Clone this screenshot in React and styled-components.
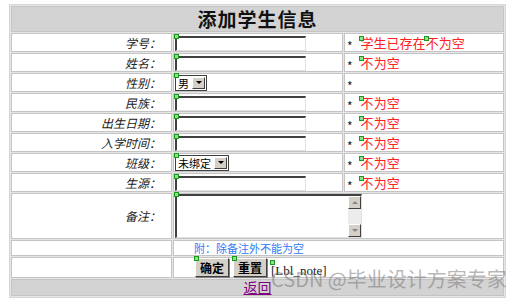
import React from "react";
import styled, { createGlobalStyle } from "styled-components";

/* COLORS */
const colorHeader = "#d3d3d3";
const colorCellBorder = "#c4c4c4";
const colorRed = "#ff2020";
const colorBlue = "#2e7cf6";
const colorPurple = "#800080";

const cjk = "'Noto Sans CJK SC', 'DejaVu Sans', sans-serif";

const GlobalStyle = createGlobalStyle`
    body {
        margin: 0;
        background: #ffffff;
        font-family: ${cjk};
    }
`;

const Page = styled.div`
    position: relative;
    width: 517px;
    height: 300px;
    padding: 4px 0 0 9px;
    box-sizing: border-box;
    overflow: hidden;
`;

const Table = styled.table`
    width: 497px;
    border-collapse: separate;
    border-spacing: 1px;
    border: 1px solid #d6d6d6;
    background: #e6e6e6;
    table-layout: fixed;
`;

const Cell = styled.td`
    border: 1px solid ${colorCellBorder};
    background: ${(p) => (p.$gray ? colorHeader : "#ffffff")};
    height: ${(p) => p.$h || 17}px;
    padding: 0 1px;
    font-size: 12px;
    line-height: 14px;
    vertical-align: middle;
    text-align: ${(p) => p.$align || "left"};
`;

const HeaderText = styled.span`
    font-size: 19px;
    line-height: 22px;
    font-weight: bold;
    letter-spacing: 1px;
    color: #111;
`;

const Label = styled.span`
    font-style: italic;
    font-size: 12px;
    color: #222;
    margin-right: 9px;
`;

const Field = styled.span`
    position: relative;
    display: inline-block;
    vertical-align: ${(p) => (p.$inline ? "baseline" : "middle")};
`;

const Marker = styled.i`
    position: absolute;
    top: ${(p) => p.$top ?? -2}px;
    left: ${(p) => p.$left ?? -1}px;
    width: 3px;
    height: 3px;
    background: #8ee08e;
    border: 1px solid #1a9a1a;
    z-index: 2;
`;

const TextInput = styled.span`
    display: block;
    width: 128px;
    height: 12px;
    border-style: solid;
    border-width: 2px 1px 1px 2px;
    border-color: #404040 #e0e0e0 #e0e0e0 #404040;
    background: #fff;
`;

const Select = styled.span`
    display: flex;
    align-items: center;
    height: 14px;
    border: 1px solid #404040;
    background: #fff;
    font-size: 11px;
    line-height: 14px;
    padding-left: 2px;
    gap: 3px;
    color: #000;
`;

const DropButton = styled.span`
    width: 11px;
    height: 10px;
    margin-right: 1px;
    background: #d4d0c8;
    border: 1px solid;
    border-color: #fff #404040 #404040 #fff;
    display: flex;
    align-items: center;
    justify-content: center;
`;

const Arrow = styled.span`
    width: 0;
    height: 0;
    border-left: 3px solid transparent;
    border-right: 3px solid transparent;
    border-top: 3px solid #000;
`;

const Star = styled.span`
    position: relative;
    top: 3px;
    font-size: 12px;
    color: #222;
    margin: 0 8px 0 1px;
`;

const Message = styled.span`
    color: ${colorRed};
    font-size: 13px;
    line-height: 14px;
`;

const TextArea = styled.span`
    display: flex;
    justify-content: flex-end;
    width: 184px;
    height: 41px;
    border-style: solid;
    border-width: 2px 1px 1px 2px;
    border-color: #404040 #e0e0e0 #e0e0e0 #404040;
    background: #fff;
`;

const ScrollBar = styled.span`
    width: 13px;
    display: flex;
    flex-direction: column;
    justify-content: space-between;
    background: #ececec;
`;

const ScrollButton = styled.span`
    height: 11px;
    background: #d4d0c8;
    border: 1px solid;
    border-color: #fff #404040 #404040 #fff;
    display: flex;
    align-items: center;
    justify-content: center;
`;

const ScrollArrow = styled.span`
    width: 0;
    height: 0;
    border-left: 3px solid transparent;
    border-right: 3px solid transparent;
    ${(p) => (p.$up ? "border-bottom: 3px solid #888;" : "border-top: 3px solid #888;")}
`;

const Note = styled.span`
    color: ${colorBlue};
    font-size: 11px;
    margin-left: 19px;
`;

const ButtonRow = styled.div`
    display: flex;
    align-items: flex-end;
    gap: 4px;
    margin-left: 20px;
`;

const Button = styled.span`
    display: flex;
    align-items: center;
    justify-content: center;
    width: 32px;
    height: 17px;
    font-size: 12px;
    font-weight: bold;
    color: #000;
    background: #d4d0c8;
    border: 1px solid;
    border-color: #fff #404040 #404040 #fff;
    box-shadow: 1px 1px 0 #808080;
`;

const LblNote = styled.span`
    font-family: "Liberation Serif", serif;
    font-size: 13px;
    color: #222;
    line-height: 12px;
`;

const BackLink = styled.a`
    color: ${colorPurple};
    font-size: 14px;
    line-height: 15px;
    text-decoration: underline;
`;

const Watermark = styled.div`
    position: absolute;
    left: 271px;
    top: 265px;
    font-size: 20px;
    line-height: 28px;
    color: rgba(120, 120, 120, 0.55);
    white-space: nowrap;
    pointer-events: none;
`;

function Input() {
    return (
        <Field>
            <Marker />
            <TextInput />
        </Field>
    );
}

function Dropdown({ value }) {
    return (
        <Field>
            <Marker />
            <Select>
                {value}
                <DropButton>
                    <Arrow />
                </DropButton>
            </Select>
        </Field>
    );
}

function Marked({ children }) {
    return (
        <Field $inline>
            <Marker $top={0} $left={-2} />
            {children}
        </Field>
    );
}

const rows = [
    { label: "学号：", control: <Input />, msg: "学生已存在" },
    { label: "姓名：", control: <Input />, msg: "" },
    { label: "性别：", control: <Dropdown value="男" />, msg: null },
    { label: "民族：", control: <Input />, msg: "" },
    { label: "出生日期：", control: <Input />, msg: "" },
    { label: "入学时间：", control: <Input />, msg: "" },
    { label: "班级：", control: <Dropdown value="未绑定" />, msg: "" },
    { label: "生源：", control: <Input />, msg: "" },
];

export default function App() {
    return (
        <Page>
            <GlobalStyle />
            <Table>
                <colgroup>
                    <col style={{ width: 161 }} />
                    <col style={{ width: 170 }} />
                    <col />
                </colgroup>
                <tbody>
                    <tr>
                        <Cell colSpan={3} $gray $h={24} $align="center">
                            <HeaderText>添加学生信息</HeaderText>
                        </Cell>
                    </tr>
                    {rows.map((row) => (
                        <tr key={row.label}>
                            <Cell $align="right">
                                <Label>{row.label}</Label>
                            </Cell>
                            <Cell>{row.control}</Cell>
                            <Cell>
                                <Star>*</Star>
                                {row.msg !== null && (
                                    <Message>
                                        {row.msg && <Marked>{row.msg}</Marked>}
                                        <Marked>不</Marked>为空
                                    </Message>
                                )}
                            </Cell>
                        </tr>
                    ))}
                    <tr>
                        <Cell $align="right" $h={44}>
                            <Label>备注：</Label>
                        </Cell>
                        <Cell colSpan={2} $h={44}>
                            <Field>
                                <Marker />
                                <TextArea>
                                    <ScrollBar>
                                        <ScrollButton>
                                            <ScrollArrow $up />
                                        </ScrollButton>
                                        <ScrollButton>
                                            <ScrollArrow />
                                        </ScrollButton>
                                    </ScrollBar>
                                </TextArea>
                            </Field>
                        </Cell>
                    </tr>
                    <tr>
                        <Cell $h={13} />
                        <Cell colSpan={2} $h={13}>
                            <Note>附：除备注外不能为空</Note>
                        </Cell>
                    </tr>
                    <tr>
                        <Cell $h={17} />
                        <Cell colSpan={2} $h={17}>
                            <ButtonRow>
                                <Field>
                                    <Marker />
                                    <Button>确定</Button>
                                </Field>
                                <Field>
                                    <Marker />
                                    <Button>重置</Button>
                                </Field>
                                <Field>
                                    <Marker $top={-3} />
                                    <LblNote>[Lbl_note]</LblNote>
                                </Field>
                            </ButtonRow>
                        </Cell>
                    </tr>
                    <tr>
                        <Cell colSpan={3} $gray $h={14} $align="center">
                            <BackLink>返回</BackLink>
                        </Cell>
                    </tr>
                </tbody>
            </Table>
            <Watermark>CSDN @毕业设计方案专家</Watermark>
        </Page>
    );
}
